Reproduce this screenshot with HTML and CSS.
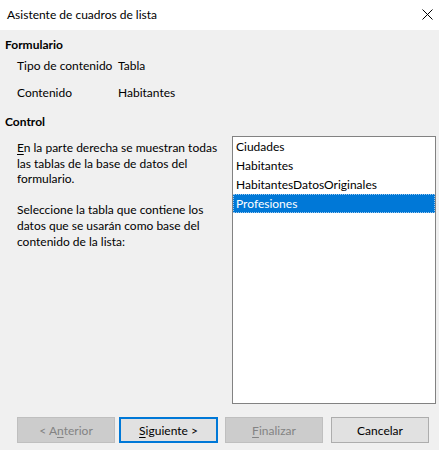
FILE: index.html
```html
<!DOCTYPE html>
<html lang="es">
<head>
<meta charset="utf-8">
<title>Asistente de cuadros de lista</title>
<link rel="stylesheet" href="styles.css">
</head>
<body>
<div class="window">
  <div class="titlebar">
    <span class="title">Asistente de cuadros de lista</span>
    <svg class="close" width="11" height="11" viewBox="0 0 11 11" aria-hidden="true">
      <path d="M0.5 0.5 L10.5 10.5 M10.5 0.5 L0.5 10.5" stroke="#000" stroke-width="1" fill="none"/>
    </svg>
  </div>
  <div class="content">
    <div class="section-title">Formulario</div>
    <div class="field-row first"><span class="label">Tipo de contenido</span><span class="value">Tabla</span></div>
    <div class="field-row second"><span class="label">Contenido</span><span class="value">Habitantes</span></div>
    <div class="section-title control">Control</div>
    <div class="control-body">
      <div class="desc">
        <p><span class="mn">E</span>n la parte derecha se muestran todas<br>las tablas de la base de datos del<br>formulario.</p>
        <p>Seleccione la tabla que contiene los<br>datos que se usarán como base del<br>contenido de la lista:</p>
      </div>
      <div class="listbox">
        <div class="item">Ciudades</div>
        <div class="item">Habitantes</div>
        <div class="item">HabitantesDatosOriginales</div>
        <div class="item selected">Profesiones</div>
      </div>
    </div>
    <div class="buttons">
      <div class="btn disabled prev">&lt; A<span class="mn">n</span>terior</div>
      <div class="btn default next"><span class="mn">S</span>iguiente &gt;</div>
      <div class="btn disabled finish"><span class="mn">F</span>inalizar</div>
      <div class="btn cancel">Cancelar</div>
    </div>
  </div>
</div>
</body>
</html>
```
FILE: styles.css
```css
html, body {
  margin: 0;
  padding: 0;
}
body {
  background: #f0f0f0;
  font-family: "Lato", "Noto Sans", sans-serif;
  font-size: 12px;
  color: #000;
  width: 439px;
  height: 450px;
  overflow: hidden;
}
.window {
  display: flex;
  flex-direction: column;
  height: 450px;
}
.titlebar {
  height: 30px;
  background: #fff;
  display: flex;
  align-items: center;
  justify-content: space-between;
  padding: 0 6px 0 7px;
}
.title {
  line-height: 16px;
}
.close {
  display: block;
  margin-top: -1px;
}
.content {
  display: flex;
  flex-direction: column;
  padding: 0 0 0 5px;
}
.section-title {
  font-weight: bold;
  line-height: 16px;
  margin-top: 7px;
}
.section-title.control {
  margin-top: 13px;
}
.field-row {
  display: flex;
  line-height: 16px;
  padding-left: 12px;
}
.field-row.first {
  margin-top: 5px;
}
.field-row.second {
  margin-top: 11px;
}
.label {
  width: 101px;
}
.control-body {
  display: flex;
  margin-top: 6px;
}
.desc {
  width: 215px;
  padding-left: 12px;
  padding-top: 4px;
}
.desc p {
  margin: 0 0 15.6px 0;
  line-height: 15.6px;
}
.mn {
  text-decoration: underline;
  text-underline-offset: 2px;
}
.listbox {
  width: 202px;
  height: 266px;
  background: #fff;
  border: 1px solid #828282;
}
.item {
  height: 19px;
  line-height: 19px;
  padding-left: 3px;
}
.item.selected {
  background: #0078d7;
  color: #fff;
  outline: 1px dotted #9cc8ee;
  outline-offset: -1px;
}
.buttons {
  display: flex;
  margin-top: 13px;
  padding-left: 12px;
}
.btn {
  box-sizing: border-box;
  width: 98px;
  height: 26px;
  display: flex;
  align-items: center;
  justify-content: center;
  background: #e1e1e1;
  border: 1px solid #adadad;
}
.btn.disabled {
  background: #cccccc;
  border-color: #bfbfbf;
  color: #838383;
}
.btn.default {
  border: 2px solid #0078d7;
  width: 99px;
  margin-left: 4px;
}
.btn.finish {
  margin-left: 7px;
}
.btn.cancel {
  margin-left: 8px;
}
```
